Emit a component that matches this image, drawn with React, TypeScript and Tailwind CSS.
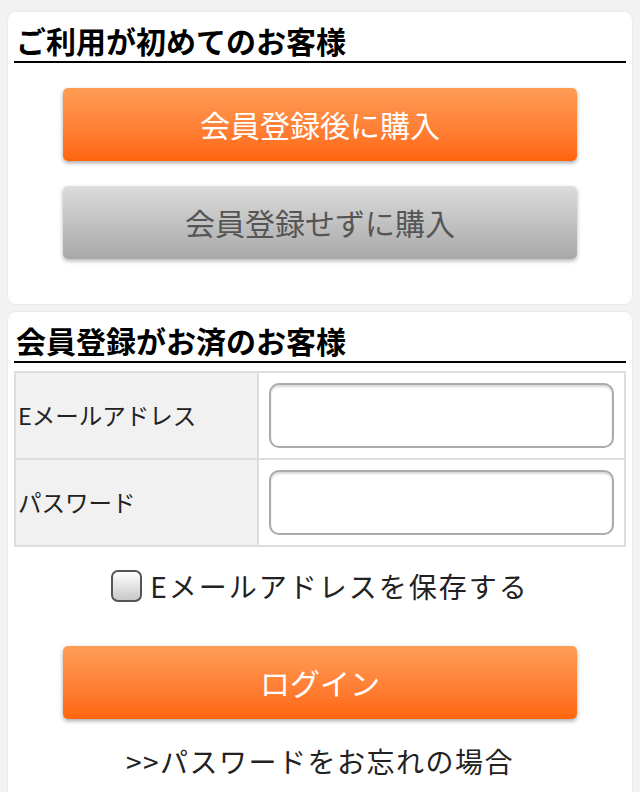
const font = "font-['Noto_Sans_CJK_JP','Noto_Sans',sans-serif]";

const OrangeButton = ({ label }: { label: string }) => (
	<button
		type="button"
		className="flex h-[73px] w-[514px] items-center justify-center rounded-[5px] bg-gradient-to-b from-[#ff9d55] to-[#ff6508] text-[30px] text-white shadow-[0_2px_4px_rgba(0,0,0,0.35)]"
	>
		{label}
	</button>
);

const GrayButton = ({ label }: { label: string }) => (
	<button
		type="button"
		className="flex h-[73px] w-[514px] items-center justify-center rounded-[5px] bg-gradient-to-b from-[#dcdcdc] to-[#a8a8a8] text-[30px] text-[#555] shadow-[0_2px_4px_rgba(0,0,0,0.3)]"
	>
		{label}
	</button>
);

const Heading = ({ children }: { children: string }) => (
	<h2 className="border-b-2 border-black pt-2 pl-[2px] text-[30px] font-bold leading-[41px] text-black">
		{children}
	</h2>
);

const FieldRow = ({ label, type, last }: { label: string; type: string; last?: boolean }) => (
	<div className={`flex ${last ? "" : "border-b-2 border-[#dddddd]"}`}>
		<div className="flex w-[243px] items-center border-r-2 border-[#dddddd] bg-[#f1f1f1] pl-[2px] text-[23.5px] text-[#222]">
			{label}
		</div>
		<div className="flex flex-1 items-center px-[10px] py-[10px]">
			<input
				type={type}
				className="h-[65px] w-full rounded-[10px] border-2 border-[#aaaaaa] bg-white shadow-[inset_0_2px_2px_rgba(0,0,0,0.15)] outline-none"
			/>
		</div>
	</div>
);

export default function App() {
	return (
		<div className={`min-h-[792px] bg-[#f2f2f2] px-2 pt-3 ${font}`}>
			<section className="rounded-lg bg-white px-1.5 pb-[45px] shadow-[0_0_3px_rgba(0,0,0,0.08)]">
				<Heading>ご利用が初めてのお客様</Heading>
				<div className="mt-[25px] flex flex-col items-center gap-[25px]">
					<OrangeButton label="会員登録後に購入" />
					<GrayButton label="会員登録せずに購入" />
				</div>
			</section>

			<section className="mt-2 rounded-t-lg bg-white px-1.5 pb-6 shadow-[0_0_3px_rgba(0,0,0,0.08)]">
				<Heading>会員登録がお済のお客様</Heading>
				<div className="mt-2 border-2 border-[#dddddd]">
					<FieldRow label="Eメールアドレス" type="email" />
					<FieldRow label="パスワード" type="password" last />
				</div>

				<label className="mt-[18px] flex items-center justify-center gap-2 text-[28px] tracking-[2px] text-[#222]">
					<span className="h-[32px] w-[31px] rounded-[7px] border-2 border-[#555] bg-gradient-to-b from-white to-[#c8c8c8]" />
					Eメールアドレスを保存する
				</label>

				<div className="mt-[39px] flex justify-center">
					<OrangeButton label="ログイン" />
				</div>

				<p className="mt-[21px] text-center text-[28px] tracking-[1.5px] text-[#222]">
					&gt;&gt;パスワードをお忘れの場合
				</p>
			</section>
		</div>
	);
}
